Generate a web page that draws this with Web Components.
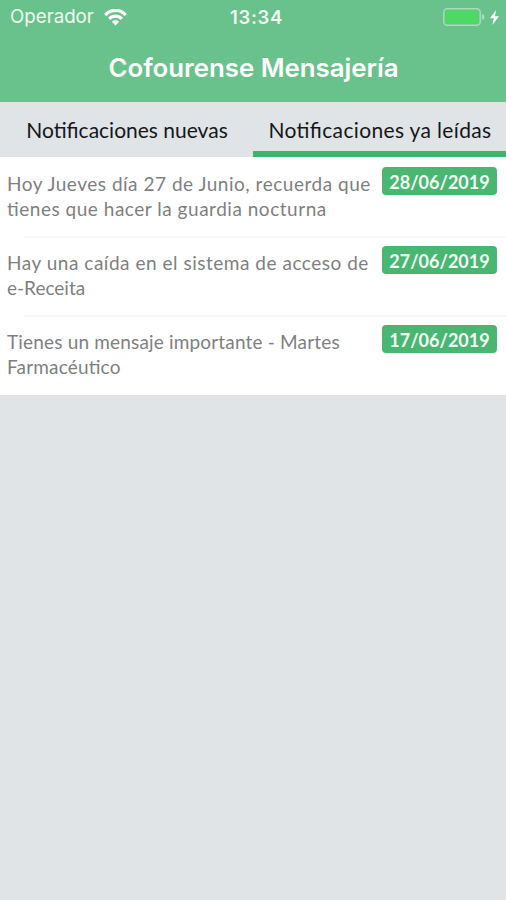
<!DOCTYPE html>
<html lang="es">
<head>
  <meta charset="utf-8" />
  <meta name="viewport" content="width=device-width, initial-scale=1" />
  <title>Cofourense Mensajería</title>
  <style>
    html,
    body {
      margin: 0;
      height: 100%;
    }

    body {
      --primary: #69c28b;
      --accent: #3cb66c;
      --badge: #49b671;
      --background: #e0e4e7;
      --text: #7f7f7f;
      background-color: var(--background);
      font-family: Lato, "Liberation Sans", sans-serif;
      overflow: hidden;
    }
  </style>
</head>
<body>
  <message-app></message-app>

  <script>
    class StatusBar extends HTMLElement {
      constructor() {
        super();
        const shadow = this.attachShadow({ mode: "open" });

        shadow.innerHTML = `
          <style>
            :host {
              display: grid;
              grid-template-columns: 1fr auto 1fr;
              align-items: center;
              height: 33px;
              padding: 0 7px 0 10px;
              color: #effaf2;
              font: 18.7px/34px Inter, sans-serif;
            }

            .carrier {
              display: flex;
              align-items: center;
              gap: 10px;
            }

            .time {
              margin-left: 4px;
              font-weight: 600;
              font-size: 18.5px;
              letter-spacing: 0.7px;
            }

            .power {
              display: flex;
              align-items: center;
              justify-content: flex-end;
              gap: 5px;
            }

            svg {
              display: block;
            }
          </style>
          <div class="carrier">
            <span>Operador</span>
            <svg width="23" height="17" viewBox="0 0 23 17">
              <g fill="none" stroke="#fff" stroke-width="3.2">
                <path d="M1.3 6.1C7 -.1 16 -.1 21.7 6.1" />
                <path d="M5.2 9.9C8.8 6.2 14.2 6.2 17.8 9.9" />
              </g>
              <path fill="#fff" d="M11.5 16.5L7.9 12.7C9.9 10.8 13.1 10.8 15.1 12.7Z" />
            </svg>
          </div>
          <span class="time">13:34</span>
          <div class="power">
            <svg width="42" height="18" viewBox="0 0 42 18">
              <rect x=".8" y=".8" width="36.4" height="16.4" rx="3.5" fill="none" stroke="#a6dcb8" stroke-width="1.5" />
              <rect x="2.5" y="2.6" width="33" height="12.8" rx="1.5" fill="#4cd964" />
              <path d="M38.8 6C42.5 6.5 42.5 11.5 38.8 12Z" fill="#a6dcb8" />
            </svg>
            <svg width="9" height="15" viewBox="0 0 9 15">
              <path d="M6 0L0 8.3H3.8L2.4 15L9 6.2H5Z" fill="#fff" />
            </svg>
          </div>
        `;
      }
    }

    class TitleBar extends HTMLElement {
      constructor() {
        super();
        const shadow = this.attachShadow({ mode: "open" });

        shadow.innerHTML = `
          <style>
            :host {
              display: block;
              height: 69px;
              padding-left: 1px;
              color: #fff;
              font: 600 25.8px/69px Inter, sans-serif;
              text-align: center;
            }
          </style>
          <slot></slot>
        `;
      }
    }

    class TabItem extends HTMLElement {
      constructor() {
        super();
        const shadow = this.attachShadow({ mode: "open" });

        shadow.innerHTML = `
          <style>
            :host {
              display: block;
              flex: 0 0 50%;
              box-sizing: border-box;
              height: 55px;
              padding-left: 1px;
              border-bottom: 6px solid transparent;
              color: #151719;
              font-size: 21px;
              font-feature-settings: "liga" 1;
              line-height: 55px;
              text-align: center;
              white-space: nowrap;
            }

            :host([active]) {
              border-bottom-color: var(--accent);
              letter-spacing: 0.35px;
            }
          </style>
          <slot></slot>
        `;
      }
    }

    class MessageItem extends HTMLElement {
      constructor() {
        super();
        const shadow = this.attachShadow({ mode: "open" });

        shadow.innerHTML = `
          <style>
            :host {
              display: grid;
              grid-template-columns: 1fr 115px;
              align-items: start;
              box-sizing: border-box;
              height: 79.2px;
              padding: 10px 9px 0 7px;
              color: var(--text);
              background-color: #fff;
            }

            :host(:not(:first-child)) {
              background: linear-gradient(#f6f7f7, #f6f7f7) 24px 0 / 100% 2px no-repeat #fff;
            }

            p {
              margin: 5px 0 0;
              font-size: 19px;
              font-feature-settings: "liga" 1;
              line-height: 24.5px;
              white-space: nowrap;
            }

            time {
              height: 28px;
              border-radius: 4px;
              background-color: var(--badge);
              color: #f2fff5;
              font-size: 18px;
              font-weight: 700;
              line-height: 30px;
              text-align: center;
            }
          </style>
          <p><slot></slot></p>
          <time></time>
        `;
      }

      connectedCallback() {
        this.shadowRoot.querySelector("time").textContent = this.getAttribute("date");
      }
    }

    class MessageApp extends HTMLElement {
      constructor() {
        super();
        const shadow = this.attachShadow({ mode: "open" });

        shadow.innerHTML = `
          <style>
            :host {
              display: block;
            }

            header {
              background-color: var(--primary);
            }

            nav {
              display: flex;
            }

            message-item span {
              display: block;
            }

            .wide {
              letter-spacing: 0.52px;
            }

            .normal {
              letter-spacing: 0.17px;
            }
          </style>
          <header>
            <status-bar></status-bar>
            <title-bar>Cofourense Mensajería</title-bar>
          </header>
          <nav>
            <tab-item>Notificaciones nuevas</tab-item>
            <tab-item active>Notificaciones ya leídas</tab-item>
          </nav>
          <main>
            <message-item date="28/06/2019">
              <span class="wide">Hoy Jueves día 27 de Junio, recuerda que</span>
              <span class="wide">tienes que hacer la guardia nocturna</span>
            </message-item>
            <message-item date="27/06/2019">
              <span class="wide">Hay una caída en el sistema de acceso de</span>
              <span>e-Receita</span>
            </message-item>
            <message-item date="17/06/2019">
              <span class="normal">Tienes un mensaje importante - Martes</span>
              <span class="normal">Farmacéutico</span>
            </message-item>
          </main>
        `;
      }
    }

    customElements.define("status-bar", StatusBar);
    customElements.define("title-bar", TitleBar);
    customElements.define("tab-item", TabItem);
    customElements.define("message-item", MessageItem);
    customElements.define("message-app", MessageApp);
  </script>
</body>
</html>
